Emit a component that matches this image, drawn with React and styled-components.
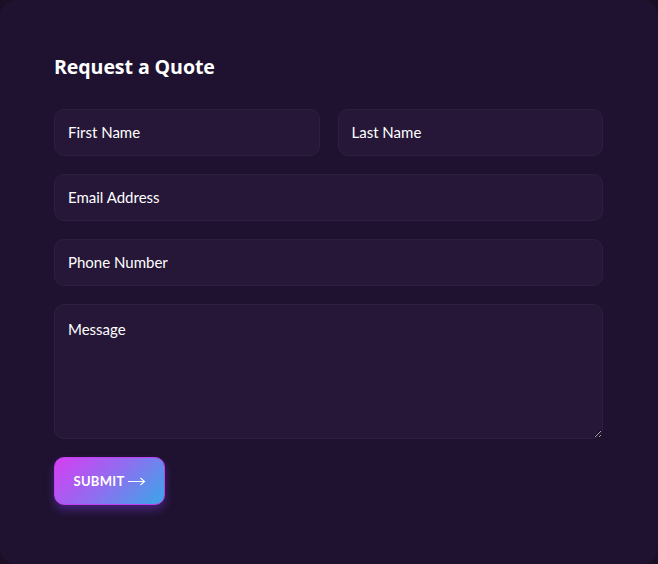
import React from 'react';
import styled, { createGlobalStyle } from 'styled-components';

const GlobalStyle = createGlobalStyle`
    html, body {
        margin: 0;
        padding: 0;
        background: #1b0f26;
    }
    * {
        box-sizing: border-box;
    }
`;

const Card = styled.div`
    width: 658px;
    height: 564px;
    background: #1f1230;
    border-radius: 16px;
    padding: 53px 55px 0 54px;
    font-family: Lato, 'Open Sans', sans-serif;
`;

const Title = styled.h2`
    margin: 0 0 28px;
    font-family: 'Open Sans', Lato, sans-serif;
    font-size: 19.6px;
    font-weight: 700;
    letter-spacing: -0.1px;
    color: #ffffff;
    line-height: 28px;
`;

const Form = styled.form`
    display: flex;
    flex-direction: column;
    gap: 18px;
`;

const Row = styled.div`
    display: grid;
    grid-template-columns: 1fr 1fr;
    gap: 18px;
`;

const fieldStyles = `
    width: 100%;
    background: #261738;
    border: 1px solid #2e1f40;
    border-radius: 10px;
    color: #ffffff;
    font-family: Lato, 'Open Sans', sans-serif;
    font-size: 15px;
    padding: 0 13px;
    outline: none;
    &::placeholder {
        color: #ffffff;
        opacity: 1;
    }
`;

const Input = styled.input`
    ${fieldStyles}
    height: 47px;
    padding-bottom: 1px;
`;

const TextArea = styled.textarea`
    ${fieldStyles}
    height: 135px;
    padding-top: 15px;
    resize: vertical;
    display: block;
    line-height: 18px;
`;

const SubmitButton = styled.button`
    align-self: flex-start;
    height: 48px;
    width: 111px;
    border: 1px solid #c23ff0;
    border-radius: 10px;
    background: linear-gradient(135deg, #d63ef2 0%, #8f6ef0 50%, #39a7e8 100%);
    box-shadow: 0 5px 9px rgba(120, 60, 230, 0.4);
    color: #ffffff;
    font-family: Lato, 'Open Sans', sans-serif;
    font-weight: 700;
    font-size: 13px;
    letter-spacing: 0.3px;
    display: flex;
    align-items: center;
    justify-content: center;
    gap: 2px;
    padding: 0;
    cursor: pointer;
`;

const ArrowIcon = styled.svg`
    width: 19px;
    height: 10px;
    margin-top: -1px;
`;

export default function App() {
    return (
        <>
            <GlobalStyle />
            <Card>
                <Title>Request a Quote</Title>
                <Form onSubmit={e => e.preventDefault()}>
                    <Row>
                        <Input placeholder="First Name" />
                        <Input placeholder="Last Name" />
                    </Row>
                    <Input placeholder="Email Address" />
                    <Input placeholder="Phone Number" />
                    <TextArea placeholder="Message" />
                    <SubmitButton type="submit">
                        SUBMIT
                        <ArrowIcon viewBox="0 0 19 10" fill="none" stroke="#ffffff" strokeWidth="1.1">
                            <path d="M1 5.5h16.5M13.5 2l4 3.5-4 3.5" />
                        </ArrowIcon>
                    </SubmitButton>
                </Form>
            </Card>
        </>
    );
}
